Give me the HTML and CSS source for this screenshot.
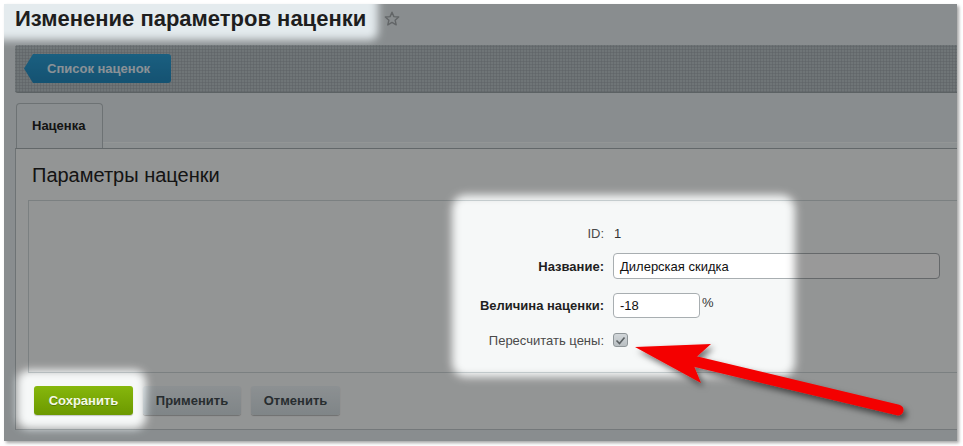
FILE: index.html
```html
<!DOCTYPE html>
<html lang="ru">
<head>
<meta charset="utf-8">
<title>Изменение параметров наценки</title>
<link rel="stylesheet" href="styles.css">
</head>
<body>
<div class="page">
  <div class="shot">
    <header class="header">
      <h1 class="title">Изменение параметров наценки</h1>
      <svg class="star" width="16" height="16" viewBox="0 0 16 16"><path d="M8 1.2l1.9 4.4 4.8.4-3.6 3.2 1.1 4.7L8 11.4l-4.2 2.5 1.1-4.7L1.3 6l4.8-.4z" fill="none" stroke="#a3a9ac" stroke-width="1.4" stroke-linejoin="round"/></svg>
    </header>
    <div class="toolbar">
      <a class="btn-back">Список наценок</a>
    </div>
    <div class="tabbar">
      <div class="tab">Наценка</div>
      <div class="tabfill"></div>
    </div>
    <section class="panel">
      <h2 class="panel-title">Параметры наценки</h2>
      <div class="box">
        <div class="row row-id"><span class="label">ID:</span><span class="value">1</span></div>
        <div class="row row-name"><span class="label label-bold">Название:</span><span class="field field-wide">Дилерская скидка</span></div>
        <div class="row row-amount"><span class="label label-bold">Величина наценки:</span><span class="field field-short">-18</span><span class="unit">%</span></div>
        <div class="row row-check"><span class="label">Пересчитать цены:</span><span class="checkbox"><svg width="11" height="9" viewBox="0 0 11 9"><path d="M1.5 4.5l3 3 5-6" fill="none" stroke="#5b6164" stroke-width="1.6"/></svg></span></div>
      </div>
      <div class="actions">
        <span class="btn btn-save">Сохранить</span>
        <span class="btn btn-grey btn-apply">Применить</span>
        <span class="btn btn-grey btn-cancel">Отменить</span>
      </div>
    </section>
  </div>
  <svg class="overlay" width="963" height="446" viewBox="0 0 963 446">
    <defs>
      <filter id="soft" x="-30%" y="-30%" width="160%" height="160%"><feGaussianBlur stdDeviation="4"/></filter>
      <mask id="holes" maskUnits="userSpaceOnUse" x="0" y="0" width="963" height="446">
        <rect x="0" y="0" width="963" height="446" fill="#fff"/>
        <g filter="url(#soft)" fill="#000">
          <rect x="-10" y="-10" width="388" height="50" rx="8"/>
          <rect x="452" y="195" width="343" height="182" rx="14"/>
          <rect x="17" y="370" width="129" height="59" rx="12"/>
        </g>
      </mask>
      <filter id="shadow" x="-20%" y="-40%" width="140%" height="180%"><feDropShadow dx="3" dy="4" stdDeviation="3" flood-color="#000" flood-opacity="0.55"/></filter>
    </defs>
    <rect x="4" y="4" width="953" height="437" fill="#000" fill-opacity="0.4" mask="url(#holes)"/>
    <g filter="url(#shadow)">
      <line x1="693" y1="361" x2="898" y2="410" stroke="#f40000" stroke-width="11" stroke-linecap="round"/>
      <polygon points="635,347 711,344 692,361 701,383" fill="#f40000"/>
    </g>
  </svg>
</div>
</body>
</html>
```

FILE: styles.css
```css
* { box-sizing: border-box; }

body {
  margin: 0;
  background: #fff;
  font-family: "Liberation Sans", Arial, sans-serif;
  font-size: 13px;
  color: #333;
}

.page {
  position: relative;
  width: 963px;
  height: 446px;
  overflow: hidden;
}

.shot {
  margin: 4px 0 0 4px;
  width: 953px;
  height: 437px;
  background: #e4ebee;
  box-shadow: 2px 2px 3px rgba(0, 0, 0, 0.35);
  display: flex;
  flex-direction: column;
}

.header {
  height: 41px;
  padding: 2px 0 0 11px;
  display: flex;
  align-items: flex-start;
}

.title {
  margin: 0;
  font-size: 22px;
  line-height: 26px;
  font-weight: bold;
  color: #1e1e1e;
}

.star {
  margin: 5px 0 0 18px;
}

.toolbar {
  margin-left: 11px;
  height: 48px;
  padding: 9px 0 0 9px;
  background-color: #bac4c7;
  background-image: radial-gradient(circle, #a2abaf 0.9px, transparent 1.2px);
  background-size: 3px 3px;
  border-bottom: 1px solid #9aa3a7;
  border-radius: 3px 0 0 3px;
}

.btn-back {
  display: flex;
  align-items: center;
  width: 147px;
  height: 29px;
  padding-left: 23px;
  font-weight: bold;
  font-size: 13px;
  color: #e6f2fa;
  background: linear-gradient(#2c9fd6, #2389be);
  clip-path: polygon(9px 0, 100% 0, 100% 100%, 9px 100%, 0 50%);
  border-radius: 0 3px 3px 0;
}

.tabbar {
  margin: 10px 0 0 11px;
  display: flex;
  align-items: flex-end;
  height: 45px;
}

.tab {
  margin-left: 1px;
  width: 87px;
  height: 45px;
  padding: 14px 0 0 15px;
  font-weight: bold;
  color: #222;
  background: #e6edf0;
  border: 1px solid #b6bec1;
  border-bottom: none;
  border-radius: 4px 4px 0 0;
}

.tabfill {
  flex: 1;
  height: 6px;
  background: #ecf2f4;
  border-top: 1px solid #f6fafb;
}

.panel {
  margin-left: 11px;
  height: 282px;
  background: #f6f8f8;
  border-left: 1px solid #b8c0c3;
  border-top: 1px solid #a6aeb1;
  border-bottom: 1px solid #c2c9cc;
  padding-top: 14px;
}

.panel-title {
  margin: 0 0 0 16px;
  font-size: 20px;
  line-height: 24px;
  font-weight: normal;
  color: #222;
}

.box {
  margin: 13px 0 0 12px;
  height: 173px;
  border: 1px solid #cdd5d7;
  border-right: none;
}

.row {
  display: flex;
  align-items: center;
}

.label {
  width: 576px;
  padding-right: 1px;
  text-align: right;
  color: #4a4a4a;
  margin-right: 8px;
}

.label-bold {
  font-weight: bold;
  color: #1f1f1f;
}

.value {
  padding-left: 1px;
  color: #333;
}

.row-id { margin-top: 22px; height: 20px; }
.row-name { margin-top: 10px; height: 26px; }
.row-amount { margin-top: 14px; height: 25px; }
.row-check { margin-top: 15px; height: 14px; }

.field {
  display: flex;
  align-items: center;
  height: 100%;
  padding: 0 6px;
  background: #fff;
  border: 1px solid #a8aeb1;
  border-radius: 4px;
  color: #111;
}

.field-wide { width: 327px; }
.field-short { width: 87px; }

.unit {
  align-self: flex-start;
  margin: 2px 0 0 2px;
  color: #333;
}

.checkbox {
  width: 15px;
  height: 14px;
  display: flex;
  align-items: center;
  justify-content: center;
  background: linear-gradient(#d2d7da, #b9bfc2);
  border: 1px solid #8f9699;
  border-radius: 3px;
}

.actions {
  margin: 13px 0 0 18px;
  display: flex;
  gap: 10px;
}

.btn {
  height: 29px;
  display: flex;
  align-items: center;
  justify-content: center;
  font-weight: bold;
  font-size: 13px;
  border-radius: 3px;
}

.btn-save {
  width: 99px;
  color: #f4f9e6;
  background: linear-gradient(#86b70c, #6c9900);
  text-shadow: 0 1px 0 rgba(0, 0, 0, 0.25);
  box-shadow: 0 1px 1px rgba(0, 0, 0, 0.2);
}

.btn-grey {
  color: #434c50;
  background: linear-gradient(#eaf1f4, #d5dee2);
  box-shadow: 0 1px 1px rgba(0, 0, 0, 0.25);
}

.btn-apply { width: 98px; }
.btn-cancel { width: 89px; }

.overlay {
  position: absolute;
  left: 0;
  top: 0;
  pointer-events: none;
}
```
